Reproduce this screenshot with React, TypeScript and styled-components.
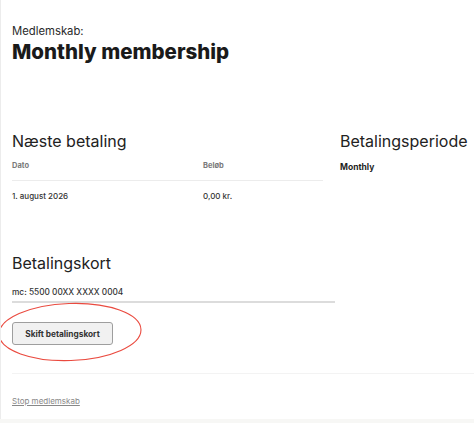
import React from "react";
import styled, { createGlobalStyle } from "styled-components";

const Global = createGlobalStyle`
  html, body { margin: 0; padding: 0; background: #f7f7f5; }
  body { font-family: "Inter", "Noto Sans", sans-serif; color: #1e1e1e; }
  * { box-sizing: border-box; }
`;

const Card = styled.div`
  width: 474px;
  height: 419px;
  background: #fff;
  border-left: 1px solid #ececec;
  padding: 0 0 0 11px;
  overflow: hidden;
  position: relative;
`;

const Header = styled.header`
  padding-top: 24px;
`;

const Kicker = styled.div`
  font-size: 11.3px;
  line-height: 15px;
  color: #2a2a2a;
`;

const Title = styled.h1`
  margin: 0;
  font-size: 20.5px;
  line-height: 25px;
  font-weight: 800;
  color: #1a1a1a;
`;

const Columns = styled.section`
  display: grid;
  grid-template-columns: 311px 1fr;
  column-gap: 17px;
  margin-top: 67px;
  white-space: nowrap;
`;

const SectionTitle = styled.h2`
  margin: 0;
  font-size: 16px;
  line-height: 21px;
  font-weight: 400;
  color: #222;
`;

const Table = styled.div`
  margin-top: 9px;
  display: grid;
  grid-template-columns: 191px 1fr;
`;

const HeadCell = styled.div`
  font-size: 7.5px;
  font-weight: 700;
  color: #7a7a7a;
  padding-bottom: 10px;
  border-bottom: 1px solid #ececec;
`;

const Cell = styled.div`
  font-size: 8px;
  font-weight: 500;
  color: #333;
  padding-top: 10px;
`;

const Period = styled.div`
  margin-top: 10px;
  font-size: 8.5px;
  font-weight: 700;
  color: #1e1e1e;
`;

const CardSection = styled.section`
  margin-top: 52px;
`;

const CardNumber = styled.div`
  margin-top: 13px;
  width: 323px;
  font-size: 8.3px;
  font-weight: 500;
  color: #333;
  padding-bottom: 4px;
  border-bottom: 2px solid #dcdcdc;
`;

const ButtonWrap = styled.div`
  position: relative;
  margin-top: 19px;
  width: 101px;
`;

const Button = styled.button`
  display: block;
  width: 101px;
  height: 23px;
  background: #f1f1f1;
  border: 1px solid #9e9e9e;
  border-radius: 3px;
  font-family: inherit;
  font-size: 8.3px;
  font-weight: 700;
  color: #333;
  padding: 0;
  cursor: pointer;
`;

const Ring = styled.svg`
  position: absolute;
  left: -14px;
  top: -19px;
  overflow: visible;
  pointer-events: none;
`;

const Divider = styled.hr`
  margin: 28px 0 0;
  border: 0;
  border-top: 1px solid #f3f3f3;
`;

const StopLink = styled.a`
  display: inline-block;
  margin-top: 22px;
  font-size: 8px;
  color: #888;
  text-decoration: underline;
  text-underline-offset: 1px;
`;

export default function App() {
  return (
    <>
      <Global />
      <Card>
        <Header>
          <Kicker>Medlemskab:</Kicker>
          <Title>Monthly membership</Title>
        </Header>

        <Columns>
          <div>
            <SectionTitle>Næste betaling</SectionTitle>
            <Table>
              <HeadCell>Dato</HeadCell>
              <HeadCell>Beløb</HeadCell>
              <Cell>1. august 2026</Cell>
              <Cell>0,00 kr.</Cell>
            </Table>
          </div>
          <div>
            <SectionTitle>Betalingsperiode</SectionTitle>
            <Period>Monthly</Period>
          </div>
        </Columns>

        <CardSection>
          <SectionTitle>Betalingskort</SectionTitle>
          <CardNumber>mc: 5500 00XX XXXX 0004</CardNumber>
          <ButtonWrap>
            <Button>Skift betalingskort</Button>
            <Ring width="144" height="60" viewBox="0 0 144 60">
              <ellipse
                cx="72"
                cy="29"
                rx="71"
                ry="28.5"
                fill="none"
                stroke="#ea4a3f"
                strokeWidth="1.1"
                transform="rotate(-2 72 29)"
              />
            </Ring>
          </ButtonWrap>
        </CardSection>

        <Divider />
        <StopLink href="#">Stop medlemskab</StopLink>
      </Card>
    </>
  );
}
